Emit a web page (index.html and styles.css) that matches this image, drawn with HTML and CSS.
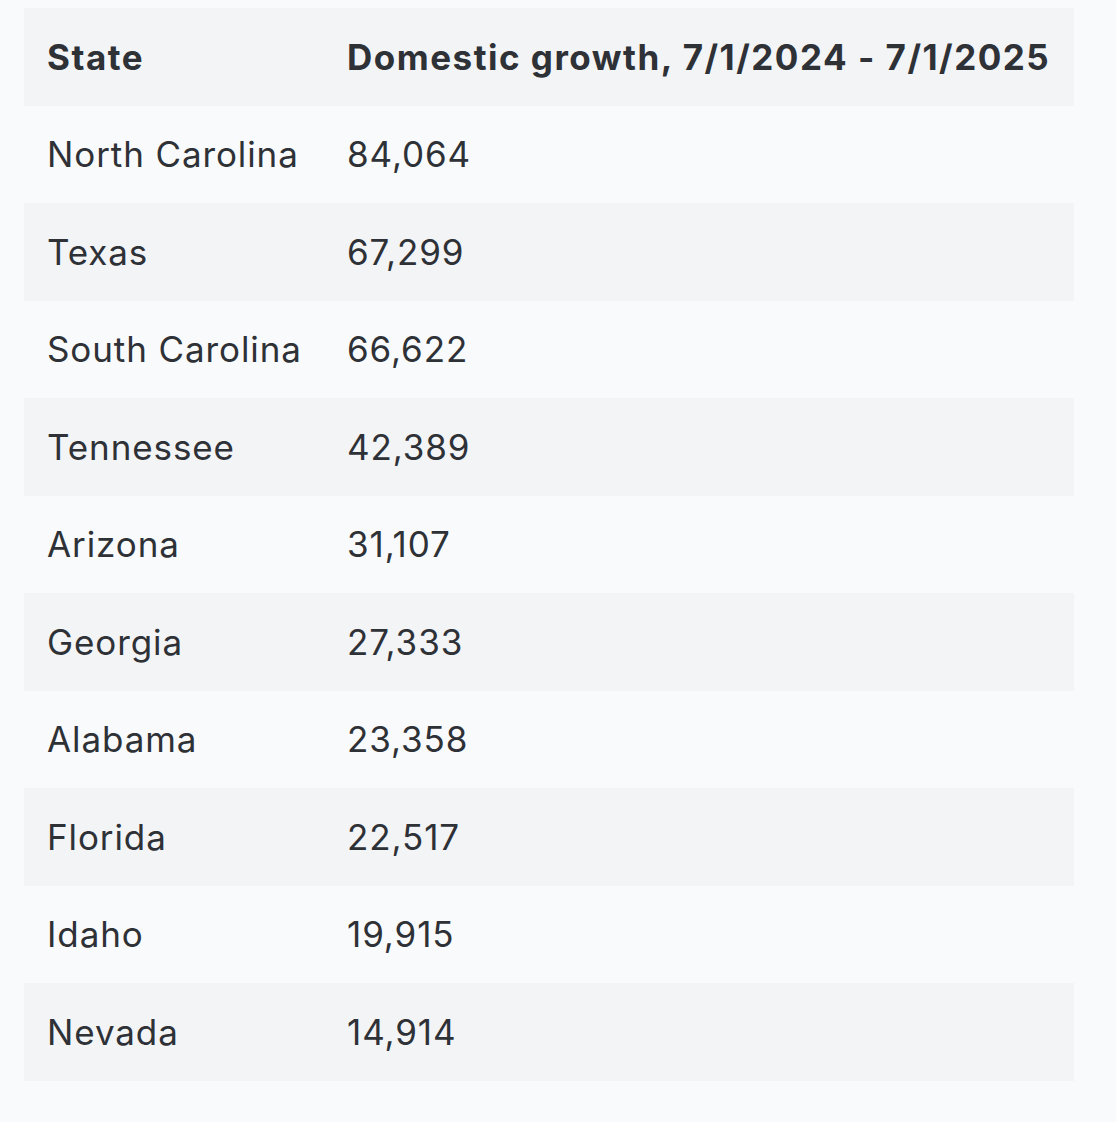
FILE: index.html
```html
<!DOCTYPE html>
<html>
<head>
<meta charset="utf-8">
<link rel="stylesheet" href="styles.css">
</head>
<body>
<table class="data">
<thead>
<tr><th class="c1">State</th><th class="c2">Domestic growth, 7/1/2024 - 7/1/2025</th></tr>
</thead>
<tbody>
<tr><td>North Carolina</td><td>84,064</td></tr>
<tr><td>Texas</td><td>67,299</td></tr>
<tr><td>South Carolina</td><td>66,622</td></tr>
<tr><td>Tennessee</td><td>42,389</td></tr>
<tr><td>Arizona</td><td>31,107</td></tr>
<tr><td>Georgia</td><td>27,333</td></tr>
<tr><td>Alabama</td><td>23,358</td></tr>
<tr><td>Florida</td><td>22,517</td></tr>
<tr><td>Idaho</td><td>19,915</td></tr>
<tr><td>Nevada</td><td>14,914</td></tr>
</tbody>
</table>
</body>
</html>
```
FILE: styles.css
```css
html, body {
  margin: 0;
  padding: 0;
  background: #f9fafb;
}
body {
  padding: 8px 42px 0 24px;
  font-family: Inter, "Noto Sans", sans-serif;
  color: #2e3136;
}
.data {
  width: 1050px;
  border-collapse: collapse;
  font-size: 35px;
}
.data th, .data td {
  height: 97.5px;
  padding: 0 0 0 23px;
  text-align: left;
  vertical-align: middle;
  box-sizing: border-box;
  white-space: nowrap;
}
.data th {
  font-weight: 700;
  letter-spacing: 1.5px;
  background: #f3f4f6;
}
.data .c1 { width: 300px; }
.data td {
  font-weight: 400;
  letter-spacing: 0.9px;
}
.data tbody tr:nth-child(even) td { background: #f3f4f6; }
```
